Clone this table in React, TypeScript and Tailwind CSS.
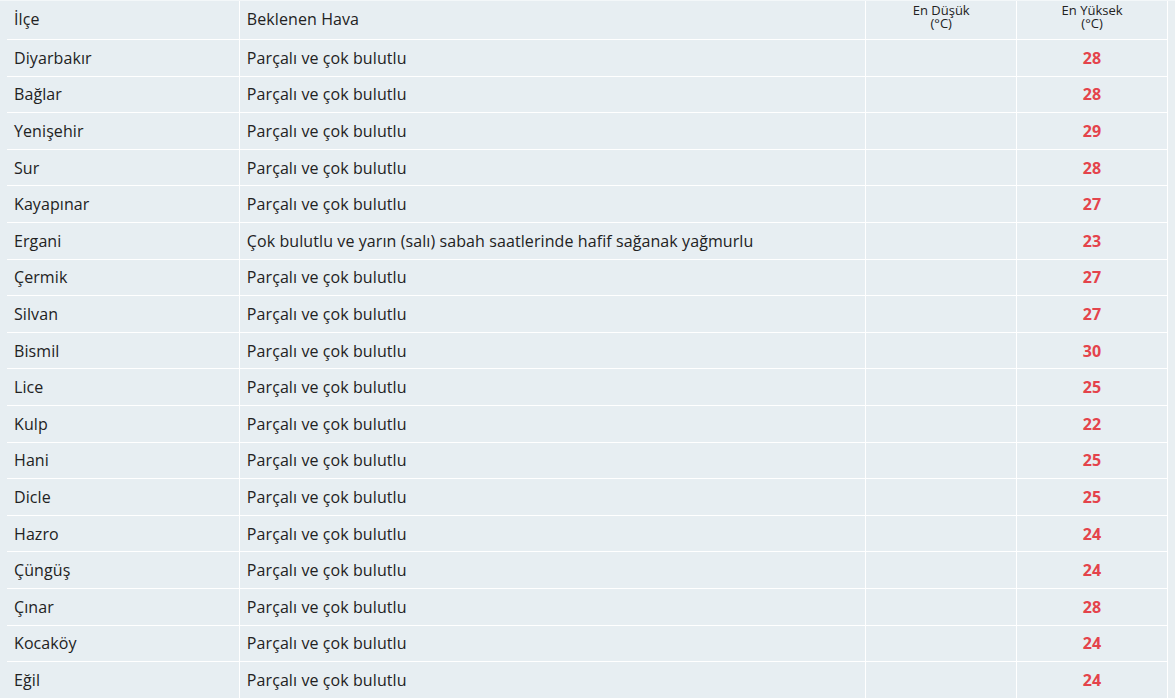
const rows: [string, string, number][] = [
  ["Diyarbakır", "Parçalı ve çok bulutlu", 28],
  ["Bağlar", "Parçalı ve çok bulutlu", 28],
  ["Yenişehir", "Parçalı ve çok bulutlu", 29],
  ["Sur", "Parçalı ve çok bulutlu", 28],
  ["Kayapınar", "Parçalı ve çok bulutlu", 27],
  ["Ergani", "Çok bulutlu ve yarın (salı) sabah saatlerinde hafif sağanak yağmurlu", 23],
  ["Çermik", "Parçalı ve çok bulutlu", 27],
  ["Silvan", "Parçalı ve çok bulutlu", 27],
  ["Bismil", "Parçalı ve çok bulutlu", 30],
  ["Lice", "Parçalı ve çok bulutlu", 25],
  ["Kulp", "Parçalı ve çok bulutlu", 22],
  ["Hani", "Parçalı ve çok bulutlu", 25],
  ["Dicle", "Parçalı ve çok bulutlu", 25],
  ["Hazro", "Parçalı ve çok bulutlu", 24],
  ["Çüngüş", "Parçalı ve çok bulutlu", 24],
  ["Çınar", "Parçalı ve çok bulutlu", 28],
  ["Kocaköy", "Parçalı ve çok bulutlu", 24],
  ["Eğil", "Parçalı ve çok bulutlu", 24],
];

export default function App() {
  return (
    <div
      className="min-h-screen bg-[#e7eef2] text-[#222222] border-t border-[#f3f7f9] overflow-hidden tracking-[0.09px]"
      style={{ fontFamily: '"Open Sans", "Noto Sans", sans-serif' }}>
      <div className="flex">
        <div className="w-[7px] shrink-0" />
        <div className="w-[1160px] shrink-0">
          {/* header */}
          <div className="flex h-[39px] border-b border-white">
            <div className="flex w-[232px] items-center px-[7px] pb-[3px] text-[16px]">İlçe</div>
            <div className="flex w-[627px] items-center border-l border-white px-[7px] pb-[3px] text-[16px]">
              Beklenen Hava
            </div>
            <div className="w-[151px] border-l border-white pt-[3px] text-center text-[13px] leading-[13px] tracking-normal">
              En Düşük
              <br />
              (°C)
            </div>
            <div className="w-[151px] border-l border-white pt-[3px] text-center text-[13px] leading-[13px] tracking-normal">
              En Yüksek
              <br />
              (°C)
            </div>
          </div>
          {rows.map(([name, desc, max]) => (
            <div key={name} className="flex h-[36.6px] border-b border-white text-[16px]">
              <div className="flex w-[232px] items-center px-[7px]">{name}</div>
              <div className="flex w-[627px] items-center border-l border-white px-[7px]">{desc}</div>
              <div className="w-[151px] border-l border-white" />
              <div className="flex w-[151px] items-center justify-center border-l border-white font-bold text-[#e4434b]">
                {max}
              </div>
            </div>
          ))}
        </div>
        <div className="flex-1 border-l border-white bg-[#e9eff2]" />
      </div>
    </div>
  );
}
